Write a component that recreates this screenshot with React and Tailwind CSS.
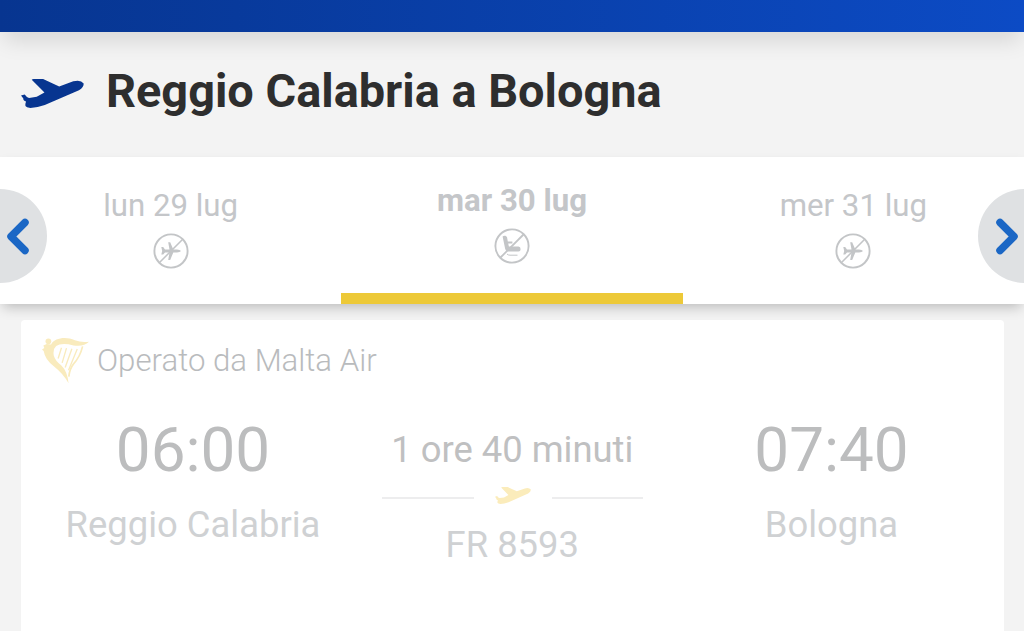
import clsx from 'clsx';

const days = [
  { id: 29, label: 'lun 29 lug', status: 'no-flight' },
  { id: 30, label: 'mar 30 lug', status: 'sold-out', selected: true },
  { id: 31, label: 'mer 31 lug', status: 'no-flight' },
];

function PlaneIcon({ className }) {
  return (
    <svg viewBox="0 0 188 86" className={className} fill="currentColor" preserveAspectRatio="none">
      <path d="M0 49 L11 46 Q17 55 24 56 L47 53 L70 40 L32 2 Q34 0 38 0 L66 0 L114 22 L156 7 Q178 1 187 13 Q188 24 173 33 L71 77 Q48 85 28 86 L18 84 Q11 81 13 74 L15 67 Q6 64 7 58 Z" />
    </svg>
  );
}

function NoFlightIcon() {
  return (
    <svg viewBox="0 0 36 36" className="size-9 text-[#c3c5c7]" fill="none" stroke="currentColor">
      <circle cx="18" cy="18" r="16.6" strokeWidth="1.9" />
      <path d="M6.5 29.5 L29.5 6.5" strokeWidth="1.5" />
      <path
        d="M28 18 Q27 16.4 24 16.4 H20.3 L17.2 9.2 H15.2 L16.5 16.4 H12 L10.2 14 H8.3 L9.2 18 L8.3 21.6 H10.2 L12 19.4 H16.5 L15.2 27 H17.2 L20.3 19.4 H24 Q27 19.4 28 18 Z"
        fill="currentColor"
        stroke="none"
      />
    </svg>
  );
}

function NoSeatIcon() {
  return (
    <svg viewBox="0 0 36 36" className="size-9 text-[#c3c5c7]" fill="none" stroke="currentColor">
      <circle cx="18" cy="18" r="16.6" strokeWidth="1.9" />
      <path d="M6.5 29.5 L29.5 6.5" strokeWidth="1.8" />
      <path
        d="M8.6 8.6 Q9.5 7.4 11.4 7.8 L13 9 L13.8 13.6 H18.4 V15.6 H14.2 L14.9 18.6 H24.5 Q26.6 19 26.6 21.2 Q26.6 23.4 24.5 23.4 H14 Q11.6 23.4 11.2 21 Z"
        fill="currentColor"
        stroke="none"
      />
      <path d="M13 26 Q14 27.2 16 27.2 H23.5" strokeWidth="1" />
    </svg>
  );
}

function HarpIcon() {
  return (
    <svg viewBox="0 0 140 140" className="size-[47px] text-[#f9ebbd]" fill="currentColor">
      <circle cx="19" cy="13" r="8.5" />
      <path d="M27 22 C38 2 72 -2 98 10 Q118 17 140 14 Q124 30 94 25 Q58 16 42 27 Q32 36 35 55 Q40 72 57 84 Q76 102 79 138 Q64 110 36 88 Q9 68 5 42 L0 37 L7 33 L4 25 L14 21 Z" />
      <g stroke="currentColor" strokeWidth="4" fill="none">
        <path d="M58 32 L48 64" />
        <path d="M73 33 L60 77" />
        <path d="M89 35 L69 91" />
        <path d="M105 36 L79 99" />
        <path d="M121 28 Q113 60 94 80 Q82 95 80 118" strokeWidth="5" />
      </g>
    </svg>
  );
}

function DayTab({ day }) {
  return (
    <button
      className={clsx(
        'flex flex-1 flex-col items-center border-b-[11px]',
        day.selected ? 'border-[#edc938] pt-[25px]' : 'border-transparent pt-[30px]',
      )}
    >
      <span
        className={clsx(
          'h-[46px] text-[31.2px] leading-[38px] text-[#c4c6c9]',
          day.selected ? 'font-bold' : 'font-normal',
        )}
      >
        {day.label}
      </span>
      {day.status === 'sold-out' ? <NoSeatIcon /> : <NoFlightIcon />}
    </button>
  );
}

function DayCarousel() {
  return (
    <div className="relative z-10 flex h-[147px] overflow-hidden bg-white">
      {days.map((day) => (
        <DayTab key={day.id} day={day} />
      ))}

      {/* Arrows */}
      <button className="absolute top-[32px] -left-[47px] size-[94px] rounded-full bg-[#dfe1e3]">
        <svg viewBox="0 0 94 94" fill="none" stroke="#1b67c5" strokeWidth="7.5" strokeLinecap="round">
          <path d="M72 33.5 L58 47.5 L72 61.5" strokeLinejoin="round" />
        </svg>
      </button>
      <button className="absolute top-[32px] -right-[48px] size-[94px] rounded-full bg-[#dfe1e3]">
        <svg viewBox="0 0 94 94" fill="none" stroke="#1b67c5" strokeWidth="7.5" strokeLinecap="round">
          <path d="M22 33.5 L36 47.5 L22 61.5" strokeLinejoin="round" />
        </svg>
      </button>
    </div>
  );
}

function Airport({ time, city, className }) {
  return (
    <div className={clsx('flex flex-col items-center', className)}>
      <span className="text-[62px] leading-[72px] text-[#bcbdbe]">{time}</span>
      <span className="mt-[17px] text-[36.4px] leading-[44px] text-[#cfd1d3]">{city}</span>
    </div>
  );
}

function FlightCard() {
  return (
    <div className="mr-[20px] ml-[20.5px] mt-4 h-[320px] rounded-t-[4px] bg-white">
      <div className="flex h-[84px] items-center gap-[8px] pb-[3px] pl-[21.5px]">
        <HarpIcon />
        <span className="text-[31.2px] leading-[38px] font-light text-[#b9bbbd]">Operato da Malta Air</span>
      </div>

      <div className="flex justify-between">
        <Airport time="06:00" city="Reggio Calabria" className="mt-[10px] w-[345px]" />
        <div className="flex flex-col items-center pt-[24px]">
          <span className="text-[36.4px] leading-[44px] text-[#bfc0c1]">1 ore 40 minuti</span>
          <div className="mt-[13px] flex h-[20px] w-[261px] items-center justify-between">
            <div className="mt-[6px] h-[2px] w-[92px] bg-[#ededee]" />
            <PlaneIcon className="h-[17px] w-9 text-[#fbecbb]" />
            <div className="mt-[6px] h-[2px] w-[91px] bg-[#ededee]" />
          </div>
          <span className="mt-[18px] text-[36.4px] leading-[44px] text-[#cfd1d3]">FR 8593</span>
        </div>
        <Airport time="07:40" city="Bologna" className="mt-[10px] w-[345px]" />
      </div>
    </div>
  );
}

export default function App() {
  return (
    <div className="h-[631px] w-[1024px] overflow-hidden bg-[#f3f3f3] font-['Roboto',sans-serif]">
      <div className="relative z-10 h-8 bg-linear-to-r from-[#073590] to-[#0c4bc5] shadow-[0_12px_22px_-4px_rgba(0,0,0,0.13)]" />

      <div className="flex h-[125px] items-center gap-[22px] pb-[7px] pl-[21px]">
        <PlaneIcon className="mt-[4px] h-[29px] w-[63px] text-[#073590]" />
        <h1 className="text-[46.9px] leading-[56px] font-bold text-[#2e2e2e]">Reggio Calabria a Bologna</h1>
      </div>

      <div className="shadow-[0_6px_12px_-3px_rgba(0,0,0,0.24)]">
        <DayCarousel />
      </div>

      <FlightCard />
    </div>
  );
}
